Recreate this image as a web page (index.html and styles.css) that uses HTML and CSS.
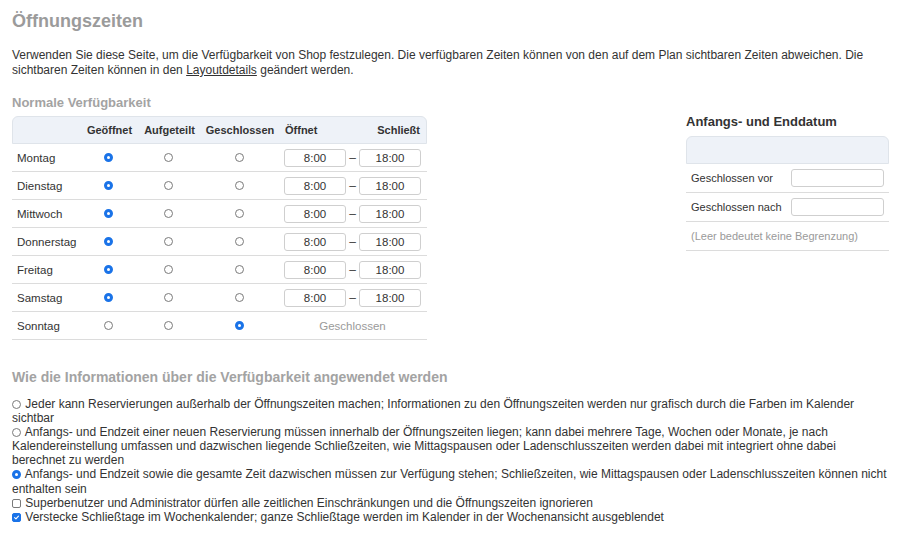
FILE: index.html
```html
<!DOCTYPE html>
<html lang="de">
<head>
<meta charset="utf-8">
<title>Öffnungszeiten</title>
<link rel="stylesheet" href="styles.css">
</head>
<body>
<h1 class="title">Öffnungszeiten</h1>
<p class="intro"><span>Verwenden Sie diese Seite, um die Verfügbarkeit von Shop festzulegen. Die verfügbaren Zeiten können von den auf dem Plan sichtbaren Zeiten abweichen. Die</span> <span>sichtbaren Zeiten können in den</span> <a href="#" class="link">Layoutdetails</a> <span>geändert werden.</span></p>

<div class="main">
  <section class="left">
    <h2 class="section-title">Normale Verfügbarkeit</h2>
    <div class="table">
      <div class="row head">
        <div></div>
        <div class="c">Geöffnet</div>
        <div class="c">Aufgeteilt</div>
        <div class="c">Geschlossen</div>
        <div class="times-head"><span>Öffnet</span><span>Schließt</span></div>
      </div>
      <div class="row"><div class="day">Montag</div><div class="c"><span class="radio on"></span></div><div class="c"><span class="radio"></span></div><div class="c"><span class="radio"></span></div><div class="times"><span class="time">8:00</span><span class="dash">–</span><span class="time">18:00</span></div></div>
      <div class="row"><div class="day">Dienstag</div><div class="c"><span class="radio on"></span></div><div class="c"><span class="radio"></span></div><div class="c"><span class="radio"></span></div><div class="times"><span class="time">8:00</span><span class="dash">–</span><span class="time">18:00</span></div></div>
      <div class="row"><div class="day">Mittwoch</div><div class="c"><span class="radio on"></span></div><div class="c"><span class="radio"></span></div><div class="c"><span class="radio"></span></div><div class="times"><span class="time">8:00</span><span class="dash">–</span><span class="time">18:00</span></div></div>
      <div class="row"><div class="day">Donnerstag</div><div class="c"><span class="radio on"></span></div><div class="c"><span class="radio"></span></div><div class="c"><span class="radio"></span></div><div class="times"><span class="time">8:00</span><span class="dash">–</span><span class="time">18:00</span></div></div>
      <div class="row"><div class="day">Freitag</div><div class="c"><span class="radio on"></span></div><div class="c"><span class="radio"></span></div><div class="c"><span class="radio"></span></div><div class="times"><span class="time">8:00</span><span class="dash">–</span><span class="time">18:00</span></div></div>
      <div class="row"><div class="day">Samstag</div><div class="c"><span class="radio on"></span></div><div class="c"><span class="radio"></span></div><div class="c"><span class="radio"></span></div><div class="times"><span class="time">8:00</span><span class="dash">–</span><span class="time">18:00</span></div></div>
      <div class="row"><div class="day">Sonntag</div><div class="c"><span class="radio"></span></div><div class="c"><span class="radio"></span></div><div class="c"><span class="radio on"></span></div><div class="times closed">Geschlossen</div></div>
    </div>
  </section>

  <aside class="right">
    <h3 class="panel-title">Anfangs- und Enddatum</h3>
    <div class="panel">
      <div class="panel-head"></div>
      <div class="prow"><span>Geschlossen vor</span><span class="field"></span></div>
      <div class="prow"><span>Geschlossen nach</span><span class="field"></span></div>
      <div class="prow note">(Leer bedeutet keine Begrenzung)</div>
    </div>
  </aside>
</div>

<h2 class="section-title second">Wie die Informationen über die Verfügbarkeit angewendet werden</h2>
<div class="options">
  <div class="opt"><span class="radio small"></span> Jeder kann Reservierungen außerhalb der Öffnungszeiten machen; Informationen zu den Öffnungszeiten werden nur grafisch durch die Farben im Kalender sichtbar</div>
  <div class="opt"><span class="radio small"></span> Anfangs- und Endzeit einer neuen Reservierung müssen innerhalb der Öffnungszeiten liegen; kann dabei mehrere Tage, Wochen oder Monate, je nach Kalendereinstellung umfassen und dazwischen liegende Schließzeiten, wie Mittagspausen oder Ladenschlusszeiten werden dabei mit integriert ohne dabei berechnet zu werden</div>
  <div class="opt"><span class="radio small on"></span> Anfangs- und Endzeit sowie die gesamte Zeit dazwischen müssen zur Verfügung stehen; Schließzeiten, wie Mittagspausen oder Ladenschlusszeiten können nicht enthalten sein</div>
  <div class="opt"><span class="check"></span> Superbenutzer und Administrator dürfen alle zeitlichen Einschränkungen und die Öffnungszeiten ignorieren</div>
  <div class="opt"><span class="check on"><svg viewBox="0 0 10 10" width="9" height="9"><path d="M2.3 5.2 L4.2 7 L7.8 3" fill="none" stroke="#fff" stroke-width="1.6" stroke-linecap="round" stroke-linejoin="round"/></svg></span> Verstecke Schließtage im Wochenkalender; ganze Schließtage werden im Kalender in der Wochenansicht ausgeblendet</div>
</div>
</body>
</html>
```

FILE: styles.css
```css
* { box-sizing: border-box; }
html, body { margin: 0; padding: 0; background: #fff; }
body {
  padding: 0 11px 0 12px;
  font-family: "Liberation Sans", Arial, sans-serif;
  font-size: 12px;
  color: #333;
}
.title {
  margin: 10px 0 0;
  font-size: 18px;
  line-height: 22px;
  font-weight: bold;
  color: #9b9b9b;
}
.intro {
  margin: 16px 0 0;
  line-height: 15px;
  width: 860px;
}
.link { color: #333; text-decoration: underline; }
.main {
  display: flex;
  justify-content: space-between;
  margin-top: 17px;
}
.left { width: 415px; }
.section-title {
  margin: 0;
  font-size: 13px;
  line-height: 16px;
  font-weight: bold;
  color: #a3a3a3;
}
.table { margin-top: 5px; }
.row {
  display: grid;
  grid-template-columns: 68px 57px 63px 78px 1fr;
  align-items: center;
  height: 28px;
  border-bottom: 1px solid #dcdcdc;
}
.row.head {
  background: #eef2f8;
  border: 1px solid #dfe4ea;
  border-radius: 6px 6px 0 0;
  font-weight: bold;
  font-size: 11px;
  height: 28px;
}
.day { padding-left: 5px; font-size: 11.5px; }
.c { display: flex; justify-content: center; }
.times-head {
  display: flex;
  justify-content: space-between;
  padding: 0 6px;
}
.times {
  display: flex;
  align-items: center;
  padding-left: 6px;
}
.times.closed { justify-content: center; padding: 0; color: #9a9a9a; font-size: 11.5px; }
.time {
  width: 62px;
  height: 18px;
  border: 1px solid #cfcfcf;
  border-radius: 3px;
  background: #fff;
  text-align: center;
  line-height: 16px;
  font-size: 11.5px;
}
.dash { width: 13px; text-align: center; color: #444; }
.radio {
  display: inline-block;
  width: 9px;
  height: 9px;
  border: 1px solid #7a7a7a;
  border-radius: 50%;
  background: #fff;
}
.radio.on {
  border: 3px solid #1a73e8;
  background: #fff;
}
.right { width: 203px; margin-top: 19px; }
.panel-title {
  margin: 0;
  font-size: 13px;
  line-height: 16px;
  font-weight: bold;
  color: #333;
}
.panel { margin-top: 6px; }
.panel-head {
  height: 28px;
  background: #eef2f8;
  border: 1px solid #dfe4ea;
  border-radius: 6px 6px 0 0;
}
.prow {
  display: flex;
  align-items: center;
  justify-content: space-between;
  height: 29px;
  padding: 0 5px;
  border-bottom: 1px solid #dcdcdc;
  font-size: 11px;
}
.prow.note { color: #9a9a9a; }
.field {
  width: 93px;
  height: 18px;
  border: 1px solid #cfcfcf;
  border-radius: 3px;
  background: #fff;
}
.second { margin-top: 29px; font-size: 14px; }
.options { margin-top: 12px; line-height: 14.1px; }
.radio.small { width: 9px; height: 9px; vertical-align: -1px; margin-right: 1px; }
.radio.small.on { border-width: 3px; }
.check {
  display: inline-flex;
  align-items: center;
  justify-content: center;
  width: 9px;
  height: 9px;
  border: 1px solid #7a7a7a;
  border-radius: 2px;
  vertical-align: -1px;
  margin-right: 1px;
}
.check.on { background: #1a73e8; border-color: #1a73e8; }
```
